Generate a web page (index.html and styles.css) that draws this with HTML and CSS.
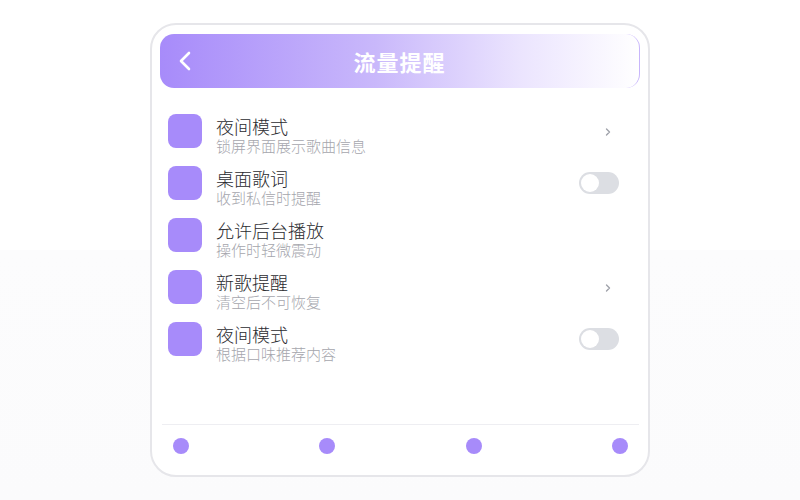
FILE: index.html
```html
<!DOCTYPE html>
<html lang="zh-CN">
<head>
  <meta charset="UTF-8">
  <meta name="viewport" content="width=device-width, initial-scale=1.0">
  <title>流量提醒</title>
  <link rel="stylesheet" href="styles.css">
</head>
<body>
  <div class="phone">
    <header class="topbar">
      <span class="back">
        <svg width="14" height="20" viewBox="0 0 14 20"><polyline points="11,2 3,10 11,18" fill="none" stroke="#fff" stroke-width="2.6" stroke-linecap="round" stroke-linejoin="round"/></svg>
      </span>
      <h1>流量提醒</h1>
      <span></span>
    </header>

    <ul class="settings">
      <li class="item">
        <span class="icon"></span>
        <div class="text">
          <div class="title">夜间模式</div>
          <div class="desc">锁屏界面展示歌曲信息</div>
        </div>
        <span class="trail">
          <svg class="chev" width="6" height="8" viewBox="0 0 6 8"><polyline points="1.5,1 4.5,4 1.5,7" fill="none" stroke="#9fa2aa" stroke-width="1.4" stroke-linecap="round" stroke-linejoin="round"/></svg>
        </span>
      </li>
      <li class="item">
        <span class="icon"></span>
        <div class="text">
          <div class="title">桌面歌词</div>
          <div class="desc">收到私信时提醒</div>
        </div>
        <span class="trail"><span class="toggle"><span class="knob"></span></span></span>
      </li>
      <li class="item">
        <span class="icon"></span>
        <div class="text">
          <div class="title">允许后台播放</div>
          <div class="desc">操作时轻微震动</div>
        </div>
        <span class="trail"></span>
      </li>
      <li class="item">
        <span class="icon"></span>
        <div class="text">
          <div class="title">新歌提醒</div>
          <div class="desc">清空后不可恢复</div>
        </div>
        <span class="trail">
          <svg class="chev" width="6" height="8" viewBox="0 0 6 8"><polyline points="1.5,1 4.5,4 1.5,7" fill="none" stroke="#9fa2aa" stroke-width="1.4" stroke-linecap="round" stroke-linejoin="round"/></svg>
        </span>
      </li>
      <li class="item">
        <span class="icon"></span>
        <div class="text">
          <div class="title">夜间模式</div>
          <div class="desc">根据口味推荐内容</div>
        </div>
        <span class="trail"><span class="toggle"><span class="knob"></span></span></span>
      </li>
    </ul>

    <nav class="tabs">
      <span class="dot"></span>
      <span class="dot"></span>
      <span class="dot"></span>
      <span class="dot"></span>
    </nav>
  </div>
</body>
</html>
```

FILE: styles.css
```css
* {
  box-sizing: border-box;
}

body {
  margin: 0;
  height: 500px;
  display: flex;
  justify-content: center;
  align-items: center;
  font-family: "Noto Sans CJK SC", "Noto Sans", sans-serif;
  background: linear-gradient(to bottom, #fff 0, #fff 50%, #fcfcfd 50%, #fbfbfc 100%);
}

.phone {
  width: 500px;
  height: 454px;
  background: #fff;
  border: 2px solid #e6e6ea;
  border-radius: 26px;
  padding: 9px 8px 0;
  display: flex;
  flex-direction: column;
  overflow: hidden;
}

.topbar {
  height: 54px;
  flex: 0 0 54px;
  border-radius: 14px;
  background: linear-gradient(90deg, #a78bfa 0%, #c9b8fb 45%, #ebe4fe 75%, #fff 100%);
  border-right: 1px solid #c8b6fb;
  display: grid;
  grid-template-columns: 1fr auto 1fr;
  align-items: center;
  padding-left: 18px;
}

.back {
  display: flex;
  align-items: center;
}

.topbar h1 {
  margin: 0;
  color: #fff;
  font-size: 22px;
  font-weight: 700;
  letter-spacing: 1px;
  line-height: 30px;
  transform: translateX(-9px);
}

.settings {
  list-style: none;
  margin: 26px 0 0;
  padding: 0 21px 0 8px;
  display: flex;
  flex-direction: column;
  gap: 12px;
  flex: 1;
}

.item {
  display: flex;
  align-items: flex-start;
  gap: 14px;
  height: 40px;
}

.icon {
  width: 34px;
  height: 34px;
  flex: 0 0 34px;
  border-radius: 8px;
  background: #a78bfa;
}

.text {
  flex: 1;
  margin-top: 1px;
}

.title {
  font-size: 18px;
  font-weight: 300;
  line-height: 22px;
  color: #2b2b2f;
}

.desc {
  font-size: 15px;
  font-weight: 300;
  line-height: 18px;
  color: #a5a6ad;
}

.trail {
  height: 34px;
  display: flex;
  align-items: center;
}

.chev {
  margin-right: 8px;
  margin-top: 2px;
}

.toggle {
  width: 40px;
  height: 22px;
  border-radius: 11px;
  background: #dcdee3;
  padding: 2px;
  display: flex;
}

.knob {
  width: 18px;
  height: 18px;
  border-radius: 50%;
  background: #fff;
}

.tabs {
  margin: 0 1px 0 2px;
  border-top: 1px solid #eeeef2;
  padding: 13px 11px 21px;
  display: flex;
  justify-content: space-between;
}

.dot {
  width: 16px;
  height: 16px;
  border-radius: 50%;
  background: #a78bfa;
}
```
